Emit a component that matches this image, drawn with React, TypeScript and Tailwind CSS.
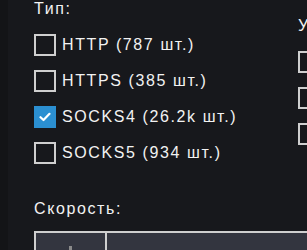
import React from 'react';

type Option = { id: string; label: string; checked?: boolean };

const leftOptions: Option[] = [
  { id: 'http', label: 'HTTP (787 шт.)' },
  { id: 'https', label: 'HTTPS (385 шт.)' },
  { id: 'socks4', label: 'SOCKS4 (26.2k шт.)', checked: true },
  { id: 'socks5', label: 'SOCKS5 (934 шт.)' },
];

const rightOptions: Option[] = [
  { id: 'a', label: '' },
  { id: 'b', label: '' },
  { id: 'c', label: '' },
];

const Checkbox: React.FC<{ checked?: boolean }> = ({ checked }) =>
  checked ? (
    <span className="w-[22px] h-[22px] shrink-0 bg-[#2b8fd1] flex items-center justify-center">
      <svg width="12" height="10" viewBox="0 0 12 10" fill="none">
        <path d="M1.5 5.2 L4.5 8 L10.5 1.8" stroke="#fff" strokeWidth="2.2" strokeLinecap="round" strokeLinejoin="round" />
      </svg>
    </span>
  ) : (
    <span className="w-[22px] h-[22px] shrink-0 border-2 border-[#cfcfcf]" />
  );

const App: React.FC = () => {
  return (
    <div
      className="w-[307px] h-[250px] overflow-hidden bg-[#17181c] flex text-[#f2f2f2]"
      style={{ fontFamily: '"Liberation Sans", Arial, sans-serif' }}
    >
      <div className="w-[8px] shrink-0 bg-[#131417]" />
      <div className="flex-1 pl-[26px] flex flex-col">
        <div className="flex gap-[60px]">
          {/* Тип */}
          <div className="w-[204px] shrink-0">
            <div className="text-[16px] leading-[18px] tracking-[0.1em]">Тип:</div>
            <div className="mt-[16px] flex flex-col gap-[14px]">
              {leftOptions.map(o => (
                <label key={o.id} className="flex items-center gap-[6px] h-[22px]">
                  <Checkbox checked={o.checked} />
                  <span className="text-[16px] tracking-[0.1em] whitespace-nowrap">{o.label}</span>
                </label>
              ))}
            </div>
          </div>
          {/* right column, cut off */}
          <div className="shrink-0 pt-[17px]">
            <div className="text-[16px] leading-[18px] tracking-[0.1em]">Уровень:</div>
            <div className="mt-[16px] flex flex-col gap-[14px]">
              {rightOptions.map(o => (
                <Checkbox key={o.id} />
              ))}
            </div>
          </div>
        </div>
        <div className="mt-[36px] text-[16px] leading-[18px] tracking-[0.1em]">Скорость:</div>
        <div className="mt-[13px] flex h-[40px] border-2 border-[#cfcfcf] bg-[#33353f] w-[400px]">
          <div className="w-[71px] border-r-2 border-[#cfcfcf] flex justify-center pt-[13px]">
            <span className="w-[3px] h-[4px] bg-[#8a8a8a]" />
          </div>
          <div className="flex-1" />
        </div>
      </div>
    </div>
  );
};

export default App;
